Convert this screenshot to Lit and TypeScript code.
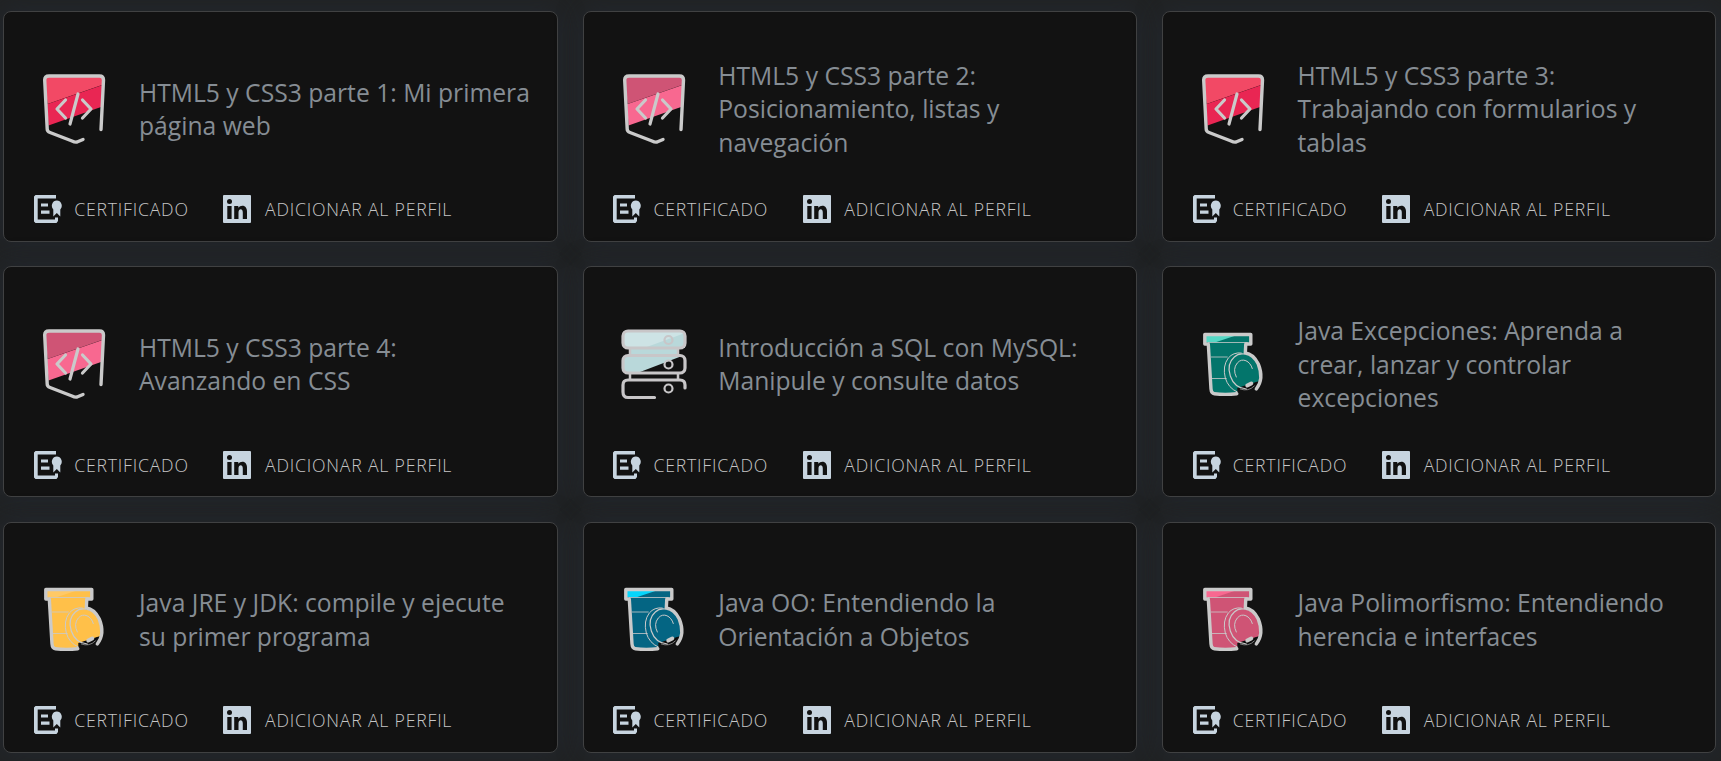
import { LitElement, html, svg, css } from "lit";
import { customElement, property } from "lit/decorators.js";

type Course = { title: string[]; icon: string; light: string; dark: string };

const COURSES: Course[] = [
  { title: ["HTML5 y CSS3 parte 1: Mi primera", "página web"], icon: "html", light: "#f24965", dark: "#e92653" },
  { title: ["HTML5 y CSS3 parte 2:", "Posicionamiento, listas y", "navegación"], icon: "html", light: "#cf5475", dark: "#f86890" },
  { title: ["HTML5 y CSS3 parte 3:", "Trabajando con formularios y", "tablas"], icon: "html", light: "#f24965", dark: "#e92653" },
  { title: ["HTML5 y CSS3 parte 4:", "Avanzando en CSS"], icon: "html", light: "#cf5475", dark: "#f86890" },
  { title: ["Introducción a SQL con MySQL:", "Manipule y consulte datos"], icon: "sql", light: "#cde3e5", dark: "#b9d8da" },
  { title: ["Java Excepciones: Aprenda a", "crear, lanzar y controlar", "excepciones"], icon: "java", light: "#55d8c5", dark: "#03756b" },
  { title: ["Java JRE y JDK: compile y ejecute", "su primer programa"], icon: "java", light: "#ffc966", dark: "#ffc049" },
  { title: ["Java OO: Entendiendo la", "Orientación a Objetos"], icon: "java", light: "#06d5fb", dark: "#046583" },
  { title: ["Java Polimorfismo: Entendiendo", "herencia e interfaces"], icon: "java", light: "#f86890", dark: "#cf5475" },
];

/* Course artwork, on a 90 unit square. */
const htmlArt = (c: Course) => svg`
  <path d="M15 17H73L72 25L17.500 44Z" fill=${c.light}/>
  <path d="M17 44.200L72.500 25L71 47L18.500 65.500Z" fill=${c.dark}/>
  <g fill="none" stroke="#cacaca" stroke-width="3.400" stroke-linecap="round" stroke-linejoin="round">
    <path d="M71 69.500L73.500 20Q73.500 16 69.500 16H19Q14.700 16 14.700 20L17.200 69Q17.200 71.500 20 72.500L42 81Q45 82.500 47 82L53 79.500"/>
    <path d="M35.500 40L27 49L35.500 58M52.500 40L61 49L52.500 58M48 34L40 64" stroke-width="3.200"/>
  </g>`;

const sqlArt = (c: Course) => svg`
  <rect x="13" y="16" width="62" height="17" rx="5" fill=${c.light}/>
  <path d="M34 33L75 18V33Z" fill=${c.dark}/>
  <rect x="20" y="34" width="48" height="6" fill=${c.dark}/>
  <path d="M13 41H72L30 57H17Q13 57 13 52Z" fill=${c.dark}/>
  <g fill="none" stroke="#c8c6c8" stroke-width="3.200" stroke-linecap="round">
    <rect x="13" y="16" width="62" height="17" rx="5"/>
    <rect x="13" y="40.500" width="62" height="17.500" rx="5"/>
    <path d="M75 73V70Q75 65 70 65H18Q13 65 13 70V77Q13 82.500 18 82.500H44.500"/>
    <path d="M20 34V40M68 34V40M20 59V64M68 59V64" stroke-width="2.500"/>
    <g stroke-width="2.200"><circle cx="58.500" cy="25" r="4"/><circle cx="58.500" cy="49.500" r="4"/><circle cx="58.500" cy="73.500" r="4"/></g>
  </g>`;

const javaArt = (c: Course) => svg`<g transform="translate(.3 0)">
  <path d="M16 20H61V28H56L55 39Q65 40 69 51Q72 58 70 66L48 73V78H24Q21 77 21 73L18 28H16Z" fill=${c.dark}/>
  <path d="M16 20H48L27 27H16Z" fill=${c.light}/>
  <path d="M50 73Q59 79 68 67Z" fill="#090909"/>
  <g fill="none" stroke="#cacaca" stroke-width="3.400" stroke-linecap="round" stroke-linejoin="round">
    <path d="M47.500 78.700Q36 80 25 78.700Q22 78.500 21.700 74L19 29H15.500V19.500H61.500V29H56.500L56 38Q64 39 69 49Q75 64 67 74"/>
    <path d="M19 27.500H58M22 42H38M22 63.500H37" stroke-width=".8"/>
    <path d="M48 77Q39 73 36 63Q33 51 39 43Q44 37 52 38" stroke-width="1"/>
    <path d="M57 74Q45 73 41 61Q37 49 45 42Q49 38 55 39" stroke-width="1.200"/>
    <path d="M47 62Q43 54 48 48C53 42 61 46 63 53.500" stroke-width="1"/>
    <path d="M58 70.500L62 68.500" stroke-width="4"/>
    <path d="M51 74Q59 77 65 71" stroke-width=".6"/>
  </g></g>`;

const certIcon = html`<svg class="cert" viewBox="0 0 28 28"><path fill="#c7d4df" d="M1.500 0H22V3.600H3.700V24.400H21V22.500H24V26L22.500 28H1.500L0 26.500V1.500Z"/><path fill="#c7d4df" d="M7 8.500H14V11.500H7ZM7 15.500H15.500V18.800H7ZM22.800 5.500A5 5.300 0 0 1 26.300 14.500V21.500L22.800 18L19.300 21.500V14.500A5 5.300 0 0 1 22.800 5.500Z"/></svg>`;
const linkedinIcon = html`<svg class="linkedin" viewBox="0 0 28 28"><rect width="28" height="28" rx="1" fill="#c7d4df"/><circle cx="6.500" cy="6.500" r="2.500" fill="#111"/><path fill="#111" d="M4.300 11H8.600V24H4.300ZM11.200 11H15.300V12.800C17.500 9.500 24 9.700 24 16.500V24H19.800V17.500C19.800 13 15.500 13.500 15.500 17.500V24H11.200Z"/></svg>`;

@customElement("course-card")
export class CourseCard extends LitElement {
  @property({ attribute: false }) course!: Course;

  static styles = css`
    :host { display: flex; flex-direction: column; box-sizing: border-box; border: 1px solid #404142; border-radius: 8px; background: #121212; box-shadow: 0 0 24px rgba(36, 42, 52, .7); overflow: visible; }
    .main { display: flex; align-items: center; height: 171px; padding: 14px 0 0 26px; box-sizing: border-box; }
    .art { width: 90px; height: 90px; flex: none; }
    .title { margin: 9px 0 0 18.600px; font: 400 24.680px/33.300px "Open Sans", sans-serif; color: #868d94; white-space: nowrap; }
    .actions { display: flex; align-items: center; padding: 12.200px 0 0 29.600px; height: 28px; font: 300 17.700px/28px "Open Sans", sans-serif; letter-spacing: .78px; color: #c6c6c6; }
    .action { display: flex; align-items: center; }
    .action + .action { margin-left: 34.600px; }
    .cert, .linkedin { width: 28px; height: 28px; margin-right: 12.200px; }
    .linkedin { margin-right: 13.800px; }
  `;

  render() {
    const c = this.course;
    const art = c.icon === "html" ? htmlArt(c) : c.icon === "sql" ? sqlArt(c) : javaArt(c);
    return html`
      <div class="main">
        <svg class="art" viewBox="0 0 90 90">${art}</svg>
        <h2 class="title">${c.title.map((line, i) => (i ? html`<br />${line}` : line))}</h2>
      </div>
      <div class="actions">
        <span class="action">${certIcon}<span>CERTIFICADO</span></span>
        <span class="action">${linkedinIcon}<span>ADICIONAR AL PERFIL</span></span>
      </div>`;
  }
}

@customElement("app-root")
export class AppRoot extends LitElement {
  static styles = css`
    :host { display: block; box-sizing: border-box; height: 761px; overflow: hidden; background: #212324; padding: 11px 5px 0 3.400px; }
    .grid { display: grid; grid-template-columns: repeat(3, 554.400px); grid-auto-rows: 231px; column-gap: 24.900px; row-gap: 24.400px; }
  `;

  render() {
    return html`<div class="grid">${COURSES.map((c) => html`<course-card .course=${c}></course-card>`)}</div>`;
  }
}
